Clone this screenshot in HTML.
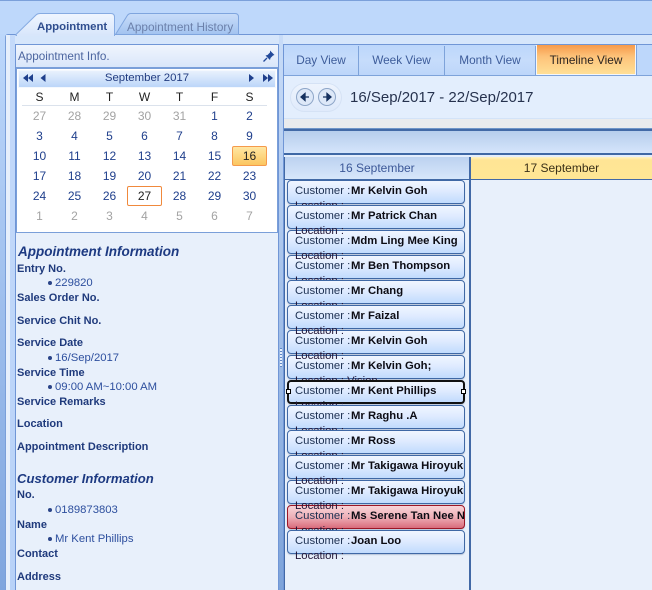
<!DOCTYPE html>
<html>
<head>
<meta charset="utf-8">
<style>
html,body{margin:0;padding:0;background:#bcd7fb}
#p{position:relative;width:652px;height:590px;overflow:hidden;font:12px "Liberation Sans",sans-serif;background:#bed8fb}
#p div,#p span{white-space:nowrap}
#p div{position:absolute}
.c{width:35px;text-align:center;height:14px;line-height:14px;color:#1f3f8c;font-size:12px}
.g{color:#a3a3a3}
.h{color:#222}
.l{left:17px;font-weight:bold;color:#1f3a7c;height:14px;line-height:14px;font-size:11px}
.v{left:55px;color:#2d4f9e;height:14px;line-height:14px;font-size:11.3px}
.b{left:48px;width:4px;height:4px;border-radius:50%;background:#2a4488}
.t{left:18px;font-weight:bold;font-style:italic;font-size:13.5px;color:#1d3a82;height:16px;line-height:16px}
.tab{top:46px;height:29px;line-height:28px;text-align:center;color:#3d5c9a;font-size:11.8px;background:linear-gradient(#bdd7fb,#c6dcfb 50%,#bdd6fa);border-right:1px solid #7ea3da}
.k{left:287px;width:176px;height:22px;border:1px solid #3f68a5;border-radius:4px;background:linear-gradient(#f0f6ff,#dfebff 45%,#c1dbfd);overflow:hidden;box-shadow:0 1px 1px rgba(90,110,150,.35)}
.k span{position:absolute;height:15px;line-height:15px}
.k .n{left:7px;top:3px;color:#1b2f50;font-size:11.3px}
.k .m{left:63px;top:3px;font-weight:bold;color:#0c0c14;font-size:11.3px}
.o{left:295px;height:14px;line-height:14px;color:#221638;font-size:11.3px}
</style>
</head>
<body>
<div id="p">
<div style="left:0;top:0;width:652px;height:1px;background:#7ba0da"></div>

<!-- main panel backgrounds -->
<div style="left:0;top:34px;width:5px;height:556px;background:linear-gradient(#bcd7fb,#7fa5de)"></div>
<div style="left:5px;top:34px;width:647px;height:556px;background:#d6e6fb;border-top:1px solid #7096d6;border-left:1px solid #7a9fd9;box-sizing:border-box;border-radius:3px 0 0 0"></div>
<div style="left:6px;top:35px;width:4px;height:555px;background:#e6effc"></div>
<div style="left:10px;top:35px;width:5px;height:555px;background:linear-gradient(#c4dafa,#b8d2f8)"></div>

<!-- top tabs -->
<svg style="position:absolute;left:0;top:0" width="260" height="36">
<defs>
<linearGradient id="a" x1="0" y1="0" x2="0" y2="1"><stop offset="0" stop-color="#f0f6ff"/><stop offset="1" stop-color="#d8e6fb"/></linearGradient>
<linearGradient id="b" x1="0" y1="0" x2="0" y2="1"><stop offset="0" stop-color="#c9ddf9"/><stop offset="1" stop-color="#a2c3f0"/></linearGradient>
</defs>
<path d="M115.5 34.5L127 16Q128.500 13.500 131 13.500H235Q238.500 13.500 238.500 17V34.500Z" fill="url(#b)" stroke="#7fa5de"/>
<path d="M16 35.500V34.500L36 15Q37.500 13.500 40 13.500H111Q114.500 13.500 114.500 17V35.500Z" fill="url(#a)" stroke="#86abe2"/>
<path d="M17 35h97" stroke="#d8e6fb" stroke-width="2"/>
</svg>
<div style="left:37px;top:20px;font-weight:bold;color:#2f4d8e;height:14px;line-height:14px;font-size:11.4px">Appointment</div>
<div style="left:127px;top:20px;color:#6c80aa;height:14px;line-height:14px;font-size:11.8px">Appointment History</div>

<!-- left pane -->
<div style="left:15px;top:44px;width:264px;height:546px;background:#e8f0fb;border:1px solid #7096d6;border-bottom:0;box-sizing:border-box"></div>
<div style="left:16px;top:45px;width:262px;height:22px;background:linear-gradient(#f0f5fd,#d9e6fa)"></div>
<div style="left:18px;top:50px;color:#4c659f;height:14px;line-height:14px;font-size:11.7px">Appointment Info.</div>
<svg style="position:absolute;left:262px;top:49px" width="14" height="14" viewBox="0 0 14 14"><path d="M8 1.500L12.500 6 11 6.500 8.500 9 8 11 3.500 6.500 5.500 6 8 3.500Z" fill="#234a9a"/><path d="M5 9L1.500 12.500" stroke="#234a9a" stroke-width="1.300"/></svg>
<div style="left:16px;top:67px;width:262px;height:166px;background:#7a9fd9"></div>
<div style="left:17px;top:69px;width:260px;height:163px;background:#fff"></div>
<div style="left:18px;top:70px;width:258px;height:18px;background:linear-gradient(#e8f1fd,#bcd6f9);border:1px solid #f4f8fe;box-sizing:border-box"></div>
<div style="left:18px;top:71px;width:258px;height:16px;line-height:15px;text-align:center;color:#223c80;font-size:11.4px">September 2017</div>
<svg style="position:absolute;left:18px;top:70px" width="260" height="18"><g fill="#1f3f8c"><path d="M10 4v8l-5-4zM15 4v8l-5-4zM27.500 4v8l-5-4zM231 4v8l5-4zM245 4v8l5-4zM250 4v8l5-4z"/></g></svg>
<div style="left:22px;top:105px;width:245px;height:1px;background:#dbe2ec"></div>

<div class="c h" style="left:22px;top:90px">S</div><div class="c h" style="left:57px;top:90px">M</div><div class="c h" style="left:92px;top:90px">T</div><div class="c h" style="left:127px;top:90px">W</div><div class="c h" style="left:162px;top:90px">T</div><div class="c h" style="left:197px;top:90px">F</div><div class="c h" style="left:232px;top:90px">S</div>

<div class="c g" style="left:22px;top:109px">27</div><div class="c g" style="left:57px;top:109px">28</div><div class="c g" style="left:92px;top:109px">29</div><div class="c g" style="left:127px;top:109px">30</div><div class="c g" style="left:162px;top:109px">31</div><div class="c" style="left:197px;top:109px">1</div><div class="c" style="left:232px;top:109px">2</div>

<div class="c" style="left:22px;top:129px">3</div><div class="c" style="left:57px;top:129px">4</div><div class="c" style="left:92px;top:129px">5</div><div class="c" style="left:127px;top:129px">6</div><div class="c" style="left:162px;top:129px">7</div><div class="c" style="left:197px;top:129px">8</div><div class="c" style="left:232px;top:129px">9</div>

<div style="left:232px;top:146px;width:33px;height:18px;border:1px solid #f59a4c;border-radius:2px;background:linear-gradient(#ffe7a3,#fbc660)"></div>
<div style="left:127px;top:186px;width:33px;height:18px;border:1px solid #f0893c;border-radius:2px;background:#fff"></div>

<div class="c" style="left:22px;top:149px">10</div><div class="c" style="left:57px;top:149px">11</div><div class="c" style="left:92px;top:149px">12</div><div class="c" style="left:127px;top:149px">13</div><div class="c" style="left:162px;top:149px">14</div><div class="c" style="left:197px;top:149px">15</div><div class="c h" style="left:232px;top:149px">16</div>

<div class="c" style="left:22px;top:169px">17</div><div class="c" style="left:57px;top:169px">18</div><div class="c" style="left:92px;top:169px">19</div><div class="c" style="left:127px;top:169px">20</div><div class="c" style="left:162px;top:169px">21</div><div class="c" style="left:197px;top:169px">22</div><div class="c" style="left:232px;top:169px">23</div>

<div class="c" style="left:22px;top:189px">24</div><div class="c" style="left:57px;top:189px">25</div><div class="c" style="left:92px;top:189px">26</div><div class="c h" style="left:127px;top:189px">27</div><div class="c" style="left:162px;top:189px">28</div><div class="c" style="left:197px;top:189px">29</div><div class="c" style="left:232px;top:189px">30</div>

<div class="c g" style="left:22px;top:209px">1</div><div class="c g" style="left:57px;top:209px">2</div><div class="c g" style="left:92px;top:209px">3</div><div class="c g" style="left:127px;top:209px">4</div><div class="c g" style="left:162px;top:209px">5</div><div class="c g" style="left:197px;top:209px">6</div><div class="c g" style="left:232px;top:209px">7</div>

<!-- info -->
<div class="t" style="top:244px">Appointment Information</div>
<div class="l" style="top:262px">Entry No.</div>
<div class="b" style="top:281px"></div><div class="v" style="top:276px">229820</div>
<div class="l" style="top:291px">Sales Order No.</div>
<div class="l" style="top:314px">Service Chit No.</div>
<div class="l" style="top:336px">Service Date</div>
<div class="b" style="top:356px"></div><div class="v" style="top:351px">16/Sep/2017</div>
<div class="l" style="top:366px">Service Time</div>
<div class="b" style="top:385px"></div><div class="v" style="top:380px">09:00 AM~10:00 AM</div>
<div class="l" style="top:395px">Service Remarks</div>
<div class="l" style="top:417px">Location</div>
<div class="l" style="top:440px">Appointment Description</div>
<div class="t" style="top:471px;left:17px;font-size:13.1px">Customer Information</div>
<div class="l" style="top:488px">No.</div>
<div class="b" style="top:508px"></div><div class="v" style="top:503px">0189873803</div>
<div class="l" style="top:518px">Name</div>
<div class="b" style="top:537px"></div><div class="v" style="top:532px">Mr Kent Phillips</div>
<div class="l" style="top:547px">Contact</div>
<div class="l" style="top:570px">Address</div>

<!-- splitter -->
<div style="left:279px;top:35px;width:4px;height:555px;background:linear-gradient(#c8dcf8,#7da3da)"></div>
<div style="left:280px;top:348px;width:2px;height:19px;background:repeating-linear-gradient(#5f86c4 0 1px,#e6effc 1px 3px)"></div>

<!-- right pane -->
<div style="left:283px;top:44px;width:369px;height:546px;background:#e8f0fb;border-top:1px solid #7096d6;border-left:1px solid #7096d6;box-sizing:border-box"></div>
<div style="left:284px;top:45px;width:368px;height:30px;background:#bdd7fb"></div>
<div class="tab" style="left:284px;width:74px">Day View</div>
<div class="tab" style="left:359px;width:85px">Week View</div>
<div class="tab" style="left:445px;width:90px">Month View</div>
<div style="left:536px;top:45px;width:100px;height:30px;box-sizing:border-box;border:1px solid #f3f6fb;border-top:0;background:linear-gradient(#f79a4a,#fdc37a 40%,#ffdf96);text-align:center;line-height:30px;color:#2b2420;font-size:11.8px">Timeline View</div>
<div style="left:636px;top:45px;width:1px;height:30px;background:#7ea3da"></div>
<div style="left:284px;top:75px;width:368px;height:1px;background:#7ea3da"></div>
<div style="left:284px;top:76px;width:368px;height:42px;background:#e3eefd"></div>
<div style="left:284px;top:118px;width:368px;height:1px;background:#d3e3f8"></div>
<div style="left:284px;top:119px;width:368px;height:9px;background:#e9ebee"></div>
<div style="left:290px;top:83px;width:52px;height:29px;border-radius:15px;background:linear-gradient(#eef4fd,#dfeafb);box-shadow:inset 0 0 0 1px #d5e2f5"></div>
<svg style="position:absolute;left:294px;top:86px" width="46" height="22" viewBox="0 0 46 22">
<g stroke="#8ea6c8"><circle cx="11" cy="11" r="8.500" fill="#dde8f8"/><circle cx="33" cy="11" r="8.500" fill="#dde8f8"/></g>
<path d="M15 11H9M11 7.500L7 11l4 3.500zM29 11h6M33 7.500L37 11l-4 3.500z" fill="#14305f" stroke="#14305f" stroke-width="1.300"/>
</svg>
<div style="left:350px;top:89px;font-size:15px;line-height:18px;height:18px;color:#26324e">16/Sep/2017 - 22/Sep/2017</div>

<div style="left:284px;top:128px;width:368px;height:1px;background:#6f95c8"></div>
<div style="left:284px;top:129px;width:368px;height:2px;background:#4269a6"></div>
<div style="left:284px;top:131px;width:368px;height:22px;background:linear-gradient(#b6cdec,#d5e5fb)"></div>
<div style="left:284px;top:153px;width:368px;height:2px;background:#3f68a5"></div>
<div style="left:284px;top:155px;width:368px;height:2px;background:#e4eefc"></div>
<div style="left:285px;top:157px;width:184px;height:22px;background:linear-gradient(#bcd2f0,#d7e6fb)"></div>
<div style="left:470px;top:157px;width:182px;height:22px;background:linear-gradient(#fff2c4 0,#ffe595 3px,#ffe695)"></div>
<div style="left:284px;top:179px;width:368px;height:1px;background:#4269a6"></div>
<div style="left:284px;top:157px;width:1px;height:433px;background:#4269a6"></div>
<div style="left:469px;top:157px;width:2px;height:433px;background:#4269a6"></div>
<div style="left:285px;top:157px;width:184px;height:22px;line-height:22px;text-align:center;color:#3c5898">16 September</div>
<div style="left:471px;top:157px;width:181px;height:22px;line-height:22px;text-align:center;color:#3a3018">17 September</div>

<!-- cards -->
<div class="k" style="top:180px;z-index:1"><span class="n">Customer :</span><span class="m">Mr Kelvin Goh</span></div>
<div class="o" style="top:199px;z-index:2">Location :</div>
<div class="k" style="top:205px;z-index:3"><span class="n">Customer :</span><span class="m">Mr Patrick Chan</span></div>
<div class="o" style="top:224px;z-index:100">Location :</div>
<div class="k" style="top:230px;z-index:5"><span class="n">Customer :</span><span class="m">Mdm Ling Mee King</span></div>
<div class="o" style="top:249px;z-index:100">Location :</div>
<div class="k" style="top:255px;z-index:7"><span class="n">Customer :</span><span class="m">Mr Ben Thompson</span></div>
<div class="o" style="top:274px;z-index:8">Location :</div>
<div class="k" style="top:280px;z-index:9"><span class="n">Customer :</span><span class="m">Mr Chang</span></div>
<div class="o" style="top:299px;z-index:10">Location :</div>
<div class="k" style="top:305px;z-index:11"><span class="n">Customer :</span><span class="m">Mr Faizal</span></div>
<div class="o" style="top:324px;z-index:100">Location :</div>
<div class="k" style="top:330px;z-index:13"><span class="n">Customer :</span><span class="m">Mr Kelvin Goh</span></div>
<div class="o" style="top:349px;z-index:100">Location :</div>
<div class="k" style="top:355px;z-index:15"><span class="n">Customer :</span><span class="m">Mr Kelvin Goh;</span></div>
<div class="o" style="top:374px;z-index:16">Location : Vision</div>
<div class="k" style="top:380px;z-index:17;width:174px;height:20px;border:2px solid #111"><span class="n" style="left:6px;top:2px">Customer :</span><span class="m" style="left:62px;top:2px">Mr Kent Phillips</span></div>
<div style="top:389px;left:286px;width:3px;height:3px;border:1px solid #000;background:#fff;z-index:18"></div>
<div style="top:389px;left:461px;width:3px;height:3px;border:1px solid #000;background:#fff;z-index:18"></div>
<div class="o" style="top:399px;z-index:17">Location :</div>
<div class="k" style="top:405px;z-index:19"><span class="n">Customer :</span><span class="m">Mr Raghu .A</span></div>
<div class="o" style="top:424px;z-index:20">Location :</div>
<div class="k" style="top:430px;z-index:21"><span class="n">Customer :</span><span class="m">Mr Ross</span></div>
<div class="o" style="top:449px;z-index:22">Location :</div>
<div class="k" style="top:455px;z-index:23"><span class="n">Customer :</span><span class="m">Mr Takigawa Hiroyuki</span></div>
<div class="o" style="top:474px;z-index:100">Location :</div>
<div class="k" style="top:480px;z-index:25"><span class="n">Customer :</span><span class="m">Mr Takigawa Hiroyuki</span></div>
<div class="o" style="top:499px;z-index:100">Location :</div>
<div class="k" style="top:505px;z-index:27;border-color:#9c1626;background:linear-gradient(#f8d4d8,#eeb0b8 50%,#d96c7c)"><span class="n">Customer :</span><span class="m">Ms Serene Tan Nee Ngoh</span></div>
<div class="o" style="top:524px;z-index:28">Location :</div>
<div class="k" style="top:530px;z-index:29"><span class="n">Customer :</span><span class="m">Joan Loo</span></div>
<div class="o" style="top:549px;z-index:100">Location :</div>
</div>
</body>
</html>
